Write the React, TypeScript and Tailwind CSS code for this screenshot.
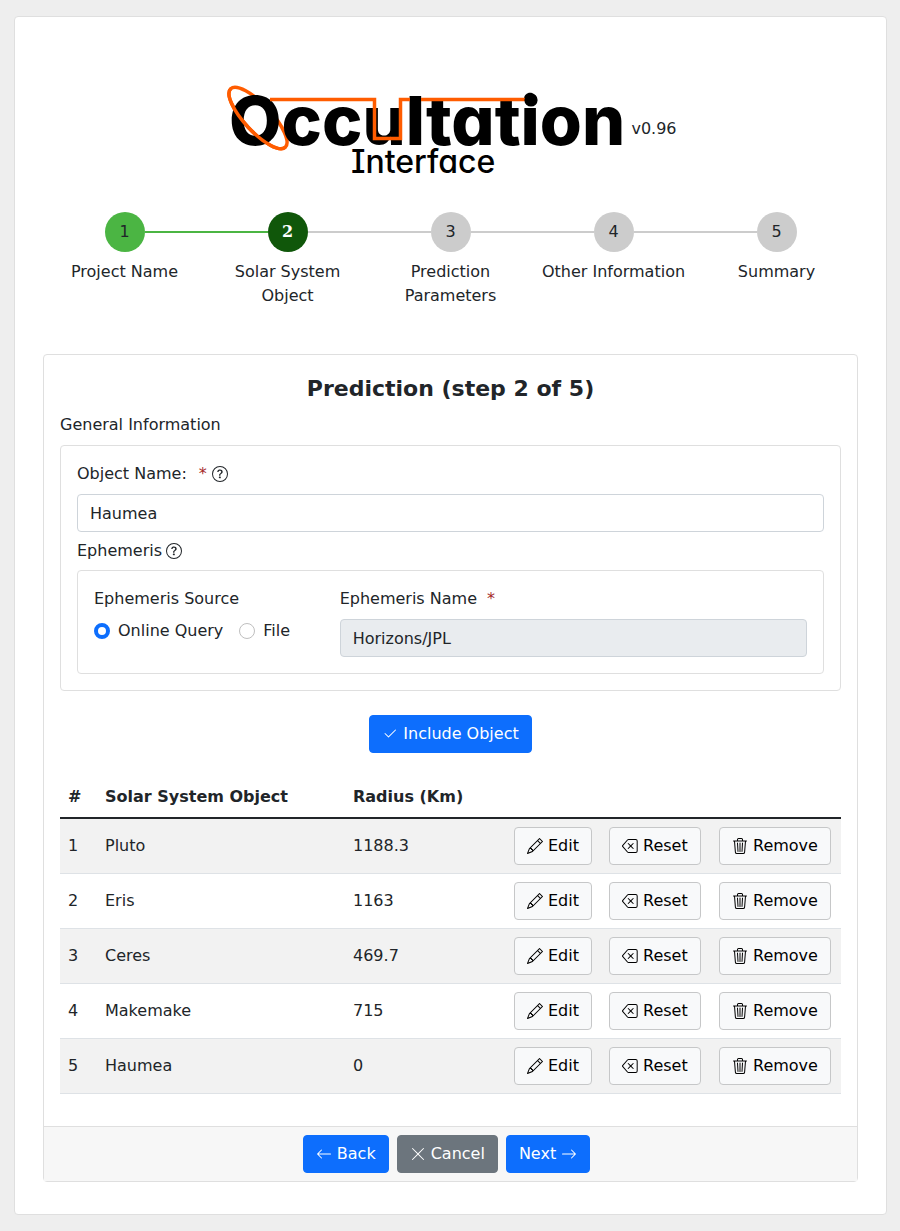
import { useState } from "react";
import type { ReactNode } from "react";
import {
  BsArrowLeft,
  BsArrowRight,
  BsBackspace,
  BsCheck2,
  BsPencil,
  BsQuestionCircle,
  BsTrash3,
  BsXLg,
} from "react-icons/bs";

type StepState = "done" | "current" | "todo";

const steps: { label: string; state: StepState }[] = [
  { label: "Project Name", state: "done" },
  { label: "Solar System Object", state: "current" },
  { label: "Prediction Parameters", state: "todo" },
  { label: "Other Information", state: "todo" },
  { label: "Summary", state: "todo" },
];

const circleStyles: Record<StepState, string> = {
  done: "bg-[#4bb543]",
  current: "bg-[#10570a] font-['DejaVu_Serif',serif] font-bold text-white",
  todo: "bg-[#ccc]",
};

const objects = [
  { name: "Pluto", radius: "1188.3" },
  { name: "Eris", radius: "1163" },
  { name: "Ceres", radius: "469.7" },
  { name: "Makemake", radius: "715" },
  { name: "Haumea", radius: "0" },
];

function Logo() {
  return (
    <svg width="402" height="106" viewBox="224 76 402 106" role="img" aria-label="Occultation Interface" className="shrink-0">
      <ellipse cx="258" cy="118" rx="40" ry="13.500" transform="rotate(47 258 118)" fill="none" stroke="#ff5c00" strokeWidth="3.500" />
      <text x="229" y="145" className="font-['Inter',sans-serif] text-[68px] font-extrabold [font-feature-settings:'cv11']">
        Occultation
      </text>
      <text x="351" y="173" className="font-['Inter',sans-serif] text-[32px] font-medium [font-feature-settings:'cv11','cv08']">
        Interface
      </text>
      <path d="M270 99.500H374.500V138.500H400.500V99.500H410M421 99.500H527" fill="none" stroke="#ff5c00" strokeWidth="3.500" />
      <circle cx="531" cy="100" r="6.600" />
      <path d="M218 118A40 13.500 0 0 0 298 118" transform="rotate(47 258 118)" fill="none" stroke="#ff5c00" strokeWidth="3.500" />
    </svg>
  );
}

function Stepper() {
  return (
    <ol className="mt-[30px] flex">
      {steps.map((step, i) => (
        <li key={step.label} className="min-w-0 flex-1 text-center">
          <div className="flex items-center">
            <span className={`h-0.5 flex-1 ${i === 0 ? "bg-transparent" : i === 1 ? "bg-[#4bb543]" : "bg-[#ccc]"}`} />
            <span className={`flex size-10 items-center justify-center rounded-full ${circleStyles[step.state]}`}>{i + 1}</span>
            <span className={`h-0.5 flex-1 ${i === 4 ? "bg-transparent" : i === 0 ? "bg-[#4bb543]" : "bg-[#ccc]"}`} />
          </div>
          <div className="mt-2 px-[5px]">{step.label}</div>
        </li>
      ))}
    </ol>
  );
}

const tones = {
  primary: "border-[#0d6efd] bg-[#0d6efd] text-white",
  secondary: "border-[#6c757d] bg-[#6c757d] text-white",
  light: "border-[#c6c7c8] bg-[#f8f9fa] text-black",
};

function Button({ tone, children }: { tone: keyof typeof tones; children: ReactNode }) {
  return (
    <button type="button" className={`inline-flex h-[38px] items-center gap-[5px] rounded border px-3 whitespace-nowrap ${tones[tone]}`}>
      {children}
    </button>
  );
}

function Radio({ label, checked, onSelect }: { label: string; checked: boolean; onSelect: () => void }) {
  return (
    <label className="flex items-center gap-2 whitespace-nowrap">
      <input
        type="radio"
        name="ephemeris-source"
        checked={checked}
        onChange={onSelect}
        className="size-4 appearance-none rounded-full border border-[#bfbfbf] bg-white checked:border-4 checked:border-[#0d6efd]"
      />
      {label}
    </label>
  );
}

export default function App() {
  const [name, setName] = useState("Haumea");
  const [source, setSource] = useState("online");

  return (
    <div className="min-h-screen bg-[#eee] py-4 pr-[13px] pl-[14px] font-['DejaVu_Sans',sans-serif] text-base leading-6 text-[#212529]">
      <main className="rounded border border-[#dfdfdf] bg-white px-7 pt-[59px] pb-8">
        <header className="flex items-center justify-center gap-[5px]">
          <Logo />
          <span>v0.96</span>
        </header>

        <Stepper />

        <section className="mt-[46px] rounded border border-[#dfdfdf]">
          <div className="p-4">
            <h1 className="mb-1.5 text-center text-[22px] leading-9 font-bold">Prediction (step 2 of 5)</h1>
            <h2>General Information</h2>

            <div className="mt-2 rounded border border-[#dfdfdf] p-4">
              <div className="flex items-center">
                <label htmlFor="object-name">Object Name:</label>
                <span className="ml-3 text-[#a52a2a]">*</span>
                <BsQuestionCircle className="ml-[5px]" />
              </div>
              <input
                id="object-name"
                value={name}
                onChange={(e) => setName(e.target.value)}
                className="mt-2 block h-[38px] w-full rounded border border-[#ced4da] bg-white px-3"
              />
              <h3 className="mt-[7px] flex items-center gap-1">
                Ephemeris
                <BsQuestionCircle />
              </h3>
              <div className="mt-[7px] grid grid-cols-3 gap-6 rounded border border-[#dfdfdf] p-4">
                <div>
                  <div>Ephemeris Source</div>
                  <div className="mt-2 flex gap-4">
                    <Radio label="Online Query" checked={source === "online"} onSelect={() => setSource("online")} />
                    <Radio label="File" checked={source === "file"} onSelect={() => setSource("file")} />
                  </div>
                </div>
                <div className="col-span-2">
                  <label htmlFor="ephemeris-name">
                    Ephemeris Name<span className="ml-2.5 text-[#a52a2a]">*</span>
                  </label>
                  <input
                    id="ephemeris-name"
                    value="Horizons/JPL"
                    disabled
                    className="mt-2 block h-[38px] w-full rounded border border-[#ced4da] bg-[#e9ecef] px-3"
                  />
                </div>
              </div>
            </div>

            <div className="my-6 flex justify-center">
              <Button tone="primary">
                <BsCheck2 />
                Include Object
              </Button>
            </div>

            <table className="mb-4 w-full table-fixed border-collapse text-left">
              <thead>
                <tr className="border-b-2 border-[#212529]">
                  <th className="w-[37px] p-2">#</th>
                  <th className="p-2">Solar System Object</th>
                  <th className="w-[161px] p-2">Radius (Km)</th>
                  <th className="w-[95px] p-2" />
                  <th className="w-[110px] p-2" />
                  <th className="w-[130px] p-2" />
                </tr>
              </thead>
              <tbody>
                {objects.map((row, i) => (
                  <tr key={row.name} className="border-b border-[#dee2e6] odd:bg-[#f2f2f2]">
                    <td className="p-2">{i + 1}</td>
                    <td className="p-2">{row.name}</td>
                    <td className="p-2">{row.radius}</td>
                    <td className="p-2">
                      <Button tone="light">
                        <BsPencil />
                        Edit
                      </Button>
                    </td>
                    <td className="p-2">
                      <Button tone="light">
                        <BsBackspace />
                        Reset
                      </Button>
                    </td>
                    <td className="p-2">
                      <Button tone="light">
                        <BsTrash3 />
                        Remove
                      </Button>
                    </td>
                  </tr>
                ))}
              </tbody>
            </table>
          </div>

          <footer className="flex justify-center gap-2 border-t border-[#dfdfdf] bg-[#f7f7f7] py-2 pr-2">
            <Button tone="primary">
              <BsArrowLeft />
              Back
            </Button>
            <Button tone="secondary">
              <BsXLg />
              Cancel
            </Button>
            <Button tone="primary">
              Next
              <BsArrowRight />
            </Button>
          </footer>
        </section>
      </main>
    </div>
  );
}
